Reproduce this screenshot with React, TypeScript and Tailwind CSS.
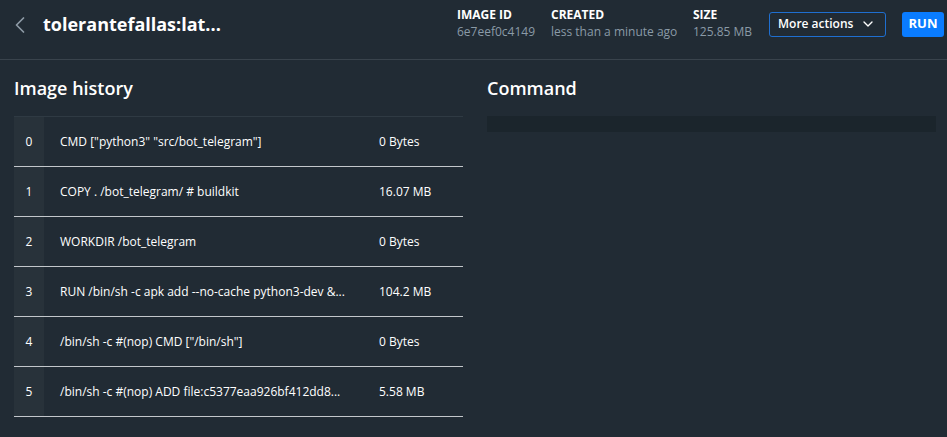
import { ChevronDown, ChevronLeft } from "lucide-react";

type Layer = { id: number; command: string; size: string };

const layers: Layer[] = [
  { id: 0, command: 'CMD ["python3" "src/bot_telegram"]', size: "0 Bytes" },
  { id: 1, command: "COPY . /bot_telegram/ # buildkit", size: "16.07 MB" },
  { id: 2, command: "WORKDIR /bot_telegram", size: "0 Bytes" },
  { id: 3, command: "RUN /bin/sh -c apk add --no-cache python3-dev &...", size: "104.2 MB" },
  { id: 4, command: '/bin/sh -c #(nop) CMD ["/bin/sh"]', size: "0 Bytes" },
  { id: 5, command: "/bin/sh -c #(nop) ADD file:c5377eaa926bf412dd8...", size: "5.58 MB" },
];

const meta = [
  { label: "IMAGE ID", value: "6e7eef0c4149", width: "w-[94px]" },
  { label: "CREATED", value: "less than a minute ago", width: "w-[142px]" },
  { label: "SIZE", value: "125.85 MB", width: "w-[76px]" },
];

function Header() {
  return (
    <div className="h-[60px] border-b border-[#39434c] pr-[3px]">
      <div className="flex h-[48px] items-center">
        <ChevronLeft className="mt-[2px] ml-[6px] size-7 text-[#8d9aa5]" strokeWidth={1.5} />
        <h1 className="ml-[9px] flex-1 text-[18px] font-bold text-white">
          tolerantefallas:lat...
        </h1>
        <div className="flex items-center">
          {meta.map((m) => (
            <div key={m.label} className={`${m.width} flex flex-col`}>
              <span className="text-[12px] leading-[16px] font-bold text-white">{m.label}</span>
              <span className="text-[12px] leading-[18px] text-[#8a9aa7]">{m.value}</span>
            </div>
          ))}
          <button className="flex h-[25px] w-[117px] items-center justify-between rounded-[3px] border border-[#1f6fd0] pr-[9px] pl-[8px] text-[12px] font-semibold text-white">
            More actions
            <ChevronDown className="size-4" strokeWidth={2} />
          </button>
          <button className="ml-[16px] h-[25px] w-[42px] rounded-[3px] bg-[#0a7cff] text-[13px] font-bold text-white">
            RUN
          </button>
        </div>
      </div>
    </div>
  );
}

function HistoryTable() {
  return (
    <div className="border-t border-[#2f3a43]">
      {layers.map((l) => (
        <div key={l.id} className="flex h-[50px] border-b border-[#c3c7cb] text-[12px] text-white">
          <div className="flex w-[30px] items-center justify-center bg-[#28323a]">{l.id}</div>
          <div className="flex w-[335px] items-center pl-[16px]">{l.command}</div>
          <div className="flex items-center">{l.size}</div>
        </div>
      ))}
    </div>
  );
}

export default function App() {
  return (
    <div
      className="h-[437px] w-[947px] overflow-hidden bg-[#212b34]"
      style={{ fontFamily: '"Open Sans", "Liberation Sans", sans-serif' }}
    >
      <Header />
      <div className="flex gap-[24px] px-[14px] pt-[16px]">
        <div className="w-[449px] shrink-0">
          <h2 className="mb-[15px] text-[18px] leading-[25px] font-semibold text-white">Image history</h2>
          <HistoryTable />
        </div>
        <div className="w-[449px] shrink-0">
          <h2 className="mb-[15px] text-[18px] leading-[25px] font-semibold text-white">Command</h2>
          <div className="h-[16px] w-full bg-[#1b252c]" />
        </div>
      </div>
    </div>
  );
}
